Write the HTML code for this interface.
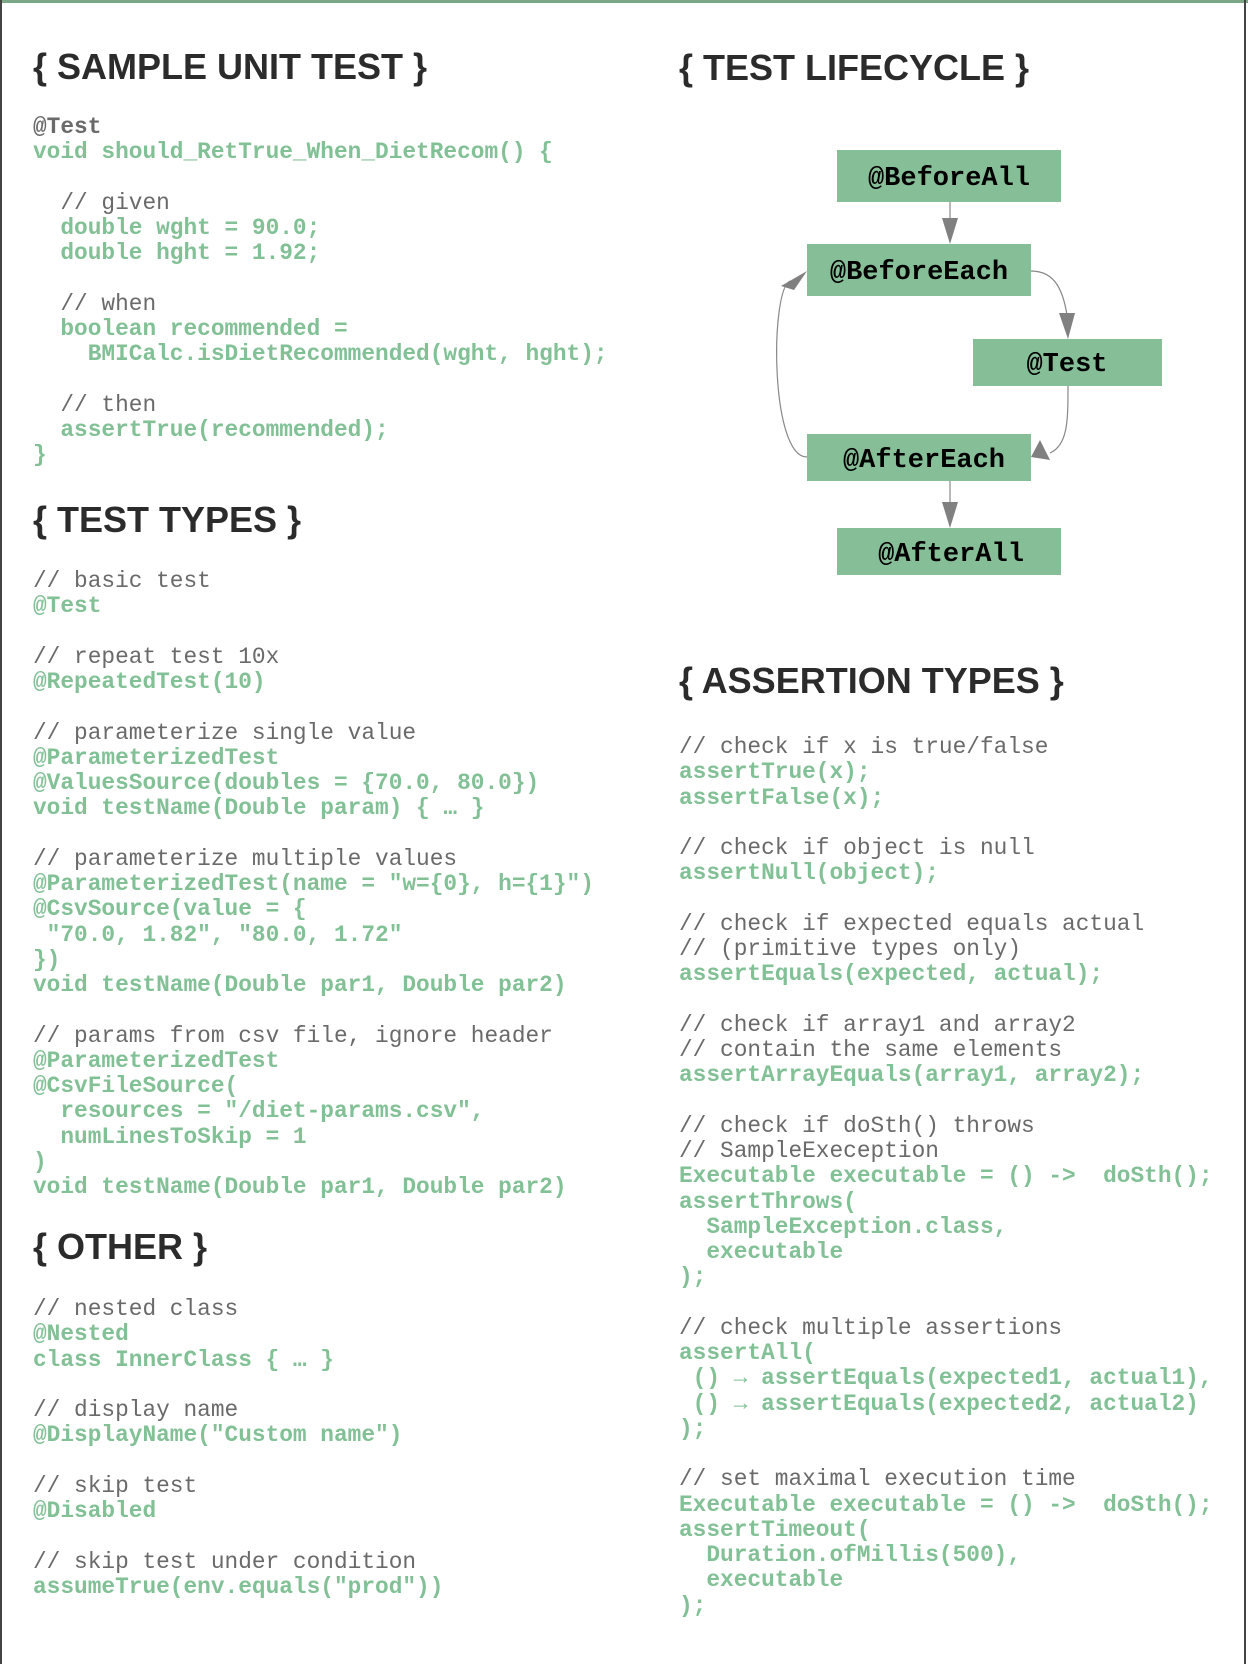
<!DOCTYPE html>
<html><head><meta charset="utf-8">
<style>
html,body{margin:0;padding:0;background:#fff}
body{width:1248px;height:1664px;position:relative;overflow:hidden}
.frame{position:absolute;left:0;top:0;width:1246px;height:1664px;border-left:2px solid #444;border-right:2px solid #444;box-sizing:border-box}
.topline{position:absolute;left:0;top:0;width:1248px;height:3px;background:#7aa886}
.t{position:absolute;font-family:"Liberation Sans",sans-serif;font-weight:bold;font-size:36px;line-height:40px;color:#2b2b2b;white-space:nowrap}
pre{position:absolute;margin:0;font-family:"Liberation Mono",monospace;font-size:22.8px;line-height:25.25px;color:#82c096;font-weight:bold}
.c{color:#6a6a6a;font-weight:normal}
.g{color:#6a6a6a}
</style></head><body>
<div class="topline"></div>
<div class="frame"></div>

<div class="t" style="left:33px;top:47px">{ SAMPLE UNIT TEST }</div>
<pre style="left:33px;top:115px"><span class="g">@Test</span>
void should_RetTrue_When_DietRecom() {

  <span class="c">// given</span>
  double wght = 90.0;
  double hght = 1.92;

  <span class="c">// when</span>
  boolean recommended =
    BMICalc.isDietRecommended(wght, hght);

  <span class="c">// then</span>
  assertTrue(recommended);
}</pre>

<div class="t" style="left:33px;top:500px">{ TEST TYPES }</div>
<pre style="left:33px;top:569px"><span class="c">// basic test</span>
@Test

<span class="c">// repeat test 10x</span>
@RepeatedTest(10)

<span class="c">// parameterize single value</span>
@ParameterizedTest
@ValuesSource(doubles = {70.0, 80.0})
void testName(Double param) { … }

<span class="c">// parameterize multiple values</span>
@ParameterizedTest(name = "w={0}, h={1}")
@CsvSource(value = {
 "70.0, 1.82", "80.0, 1.72"
})
void testName(Double par1, Double par2)

<span class="c">// params from csv file, ignore header</span>
@ParameterizedTest
@CsvFileSource(
  resources = "/diet-params.csv",
  numLinesToSkip = 1
)
void testName(Double par1, Double par2)</pre>

<div class="t" style="left:33px;top:1227px">{ OTHER }</div>
<pre style="left:33px;top:1297px"><span class="c">// nested class</span>
@Nested
class InnerClass { … }

<span class="c">// display name</span>
@DisplayName("Custom name")

<span class="c">// skip test</span>
@Disabled

<span class="c">// skip test under condition</span>
assumeTrue(env.equals("prod"))</pre>

<div class="t" style="left:679px;top:48px">{ TEST LIFECYCLE }</div>

<svg style="position:absolute;left:0;top:0" width="1248" height="700">
<g fill="#86bf97">
<rect x="837" y="150" width="224" height="52"/>
<rect x="807" y="244" width="224" height="52"/>
<rect x="973" y="339" width="189" height="47"/>
<rect x="807" y="434" width="224" height="47"/>
<rect x="837" y="528" width="224" height="47"/>
</g>
<g font-family="Liberation Mono, monospace" font-weight="bold" font-size="27" fill="#000" text-anchor="middle">
<text x="949" y="185">@BeforeAll</text>
<text x="919" y="279">@BeforeEach</text>
<text x="1067" y="371">@Test</text>
<text x="924" y="467">@AfterEach</text>
<text x="951" y="561">@AfterAll</text>
</g>
<g stroke="#888" stroke-width="1.2" fill="none">
<line x1="950" y1="202" x2="950" y2="226"/>
<line x1="950" y1="481" x2="950" y2="510"/>
<path d="M1031 271 C1055 271 1064 290 1068 322"/>
<path d="M1068 386 C1068 420 1068 445 1050 453"/>
<path d="M807 457 C770 457 770 290 790 281"/>
</g>
<g fill="#808080">
<polygon points="942,218 958,218 950,244"/>
<polygon points="942,502 958,502 950,528"/>
<polygon points="1059,313 1075,313 1068,339"/>
<polygon points="1040,440 1050,460 1031,457"/>
<polygon points="781,286 794,290 807,271"/>
</g>
</svg>

<div class="t" style="left:679px;top:661px">{ ASSERTION TYPES }</div>
<pre style="left:679px;top:735px"><span class="c">// check if x is true/false</span>
assertTrue(x);
assertFalse(x);

<span class="c">// check if object is null</span>
assertNull(object);

<span class="c">// check if expected equals actual</span>
<span class="c">// (primitive types only)</span>
assertEquals(expected, actual);

<span class="c">// check if array1 and array2</span>
<span class="c">// contain the same elements</span>
assertArrayEquals(array1, array2);

<span class="c">// check if doSth() throws</span>
<span class="c">// SampleExeception</span>
Executable executable = () ->  doSth();
assertThrows(
  SampleException.class,
  executable
);

<span class="c">// check multiple assertions</span>
assertAll(
 () → assertEquals(expected1, actual1),
 () → assertEquals(expected2, actual2)
);

<span class="c">// set maximal execution time</span>
Executable executable = () ->  doSth();
assertTimeout(
  Duration.ofMillis(500),
  executable
);</pre>
</body></html>
